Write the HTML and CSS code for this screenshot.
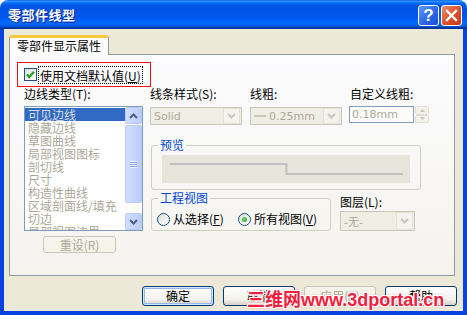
FILE: index.html
```html
<!DOCTYPE html>
<html lang="zh-CN">
  <head>
    <meta charset="UTF-8" />
    <title>零部件线型</title>
    <link rel="stylesheet" href="styles.css">
  </head>
  <body>
    <div class="window">
      <div class="titlebar">
        <span class="title">零部件线型</span>
        <div class="caption-buttons">
          <span class="cap-btn help">?</span>
          <span class="cap-btn close">
            <svg width="19" height="19" viewBox="0 0 19 19">
              <path d="M5 5 L14 14 M14 5 L5 14" stroke="#fff" stroke-width="2.4" stroke-linecap="square" />
            </svg>
          </span>
        </div>
      </div>

      <div class="frame">
        <div class="client">
          <div class="tabs">
            <div class="tab">零部件显示属性</div>
          </div>

          <div class="panel">
            <div class="default-box">
              <span class="checkbox">
                <svg width="11" height="11" viewBox="0 0 11 11">
                  <polyline points="2,5.5 4.2,8 9,2.8" fill="none" stroke="#21A121" stroke-width="2.2" />
                </svg>
              </span>
              <span class="focus-label">使用文档默认值(<u>U</u>)</span>
            </div>

            <div class="main">
              <!-- edge type list -->
              <div class="col-left">
                <div class="field-label">边线类型(T):</div>
                <div class="listbox">
                  <ul class="items">
                    <li class="selected">可见边线</li>
                    <li>隐藏边线</li>
                    <li>草图曲线</li>
                    <li>局部视图图标</li>
                    <li>剖切线</li>
                    <li>尺寸</li>
                    <li>构造性曲线</li>
                    <li>区域剖面线/填充</li>
                    <li>切边</li>
                    <li>局部视图边界</li>
                  </ul>
                  <div class="scrollbar">
                    <span class="sb-btn">
                      <svg width="9" height="6" viewBox="0 0 9 6"><polyline points="1,5 4.5,1.5 8,5" fill="none" stroke="#4D6185" stroke-width="2" /></svg>
                    </span>
                    <span class="sb-thumb">
                      <span class="grip"></span>
                    </span>
                    <span class="sb-track"></span>
                    <span class="sb-btn">
                      <svg width="9" height="6" viewBox="0 0 9 6"><polyline points="1,1 4.5,4.5 8,1" fill="none" stroke="#4D6185" stroke-width="2" /></svg>
                    </span>
                  </div>
                </div>
                <div class="btn reset disabled">重设(R)</div>
              </div>

              <div class="col-right">
                <div class="fields">
                  <div class="field style-field">
                    <div class="field-label">线条样式(S):</div>
                    <div class="combo">
                      <span class="combo-value">Solid</span>
                      <span class="combo-btn">
                        <svg width="9" height="6" viewBox="0 0 9 6"><polyline points="1,1 4.5,4.5 8,1" fill="none" stroke="#C9C7BA" stroke-width="2" /></svg>
                      </span>
                    </div>
                  </div>
                  <div class="field weight-field">
                    <div class="field-label">线粗:</div>
                    <div class="combo">
                      <span class="combo-value"><span class="dash"></span>0.25mm</span>
                      <span class="combo-btn">
                        <svg width="9" height="6" viewBox="0 0 9 6"><polyline points="1,1 4.5,4.5 8,1" fill="none" stroke="#C9C7BA" stroke-width="2" /></svg>
                      </span>
                    </div>
                  </div>
                  <div class="field custom-field">
                    <div class="field-label">自定义线粗:</div>
                    <div class="spin-input">
                      <span class="input">0.18mm</span>
                      <span class="spinner">
                        <span class="spin-btn">
                          <svg width="5" height="3" viewBox="0 0 5 3"><polygon points="0,3 2.5,0 5,3" fill="#C9C7BA" /></svg>
                        </span>
                        <span class="spin-btn">
                          <svg width="5" height="3" viewBox="0 0 5 3"><polygon points="0,0 2.5,3 5,0" fill="#C9C7BA" /></svg>
                        </span>
                      </span>
                    </div>
                  </div>
                </div>

                <fieldset class="group preview-group">
                  <legend>预览</legend>
                  <div class="preview">
                    <svg width="248" height="28" viewBox="0 0 248 28">
                      <path d="M8 9 H124.5 V19 H241" fill="none" stroke="#C0C0C0" stroke-width="2" />
                    </svg>
                  </div>
                </fieldset>

                <div class="row2">
                  <fieldset class="group view-group">
                    <legend>工程视图</legend>
                    <div class="radios">
                      <label class="radio-item first"><span class="radio"></span>从选择(<u>F</u>)</label>
                      <label class="radio-item"><span class="radio checked"></span>所有视图(<u>V</u>)</label>
                    </div>
                  </fieldset>
                  <div class="layer">
                    <div class="field-label">图层(L):</div>
                    <div class="combo layer-combo">
                      <span class="combo-value">-无-</span>
                      <span class="combo-btn">
                        <svg width="9" height="6" viewBox="0 0 9 6"><polyline points="1,1 4.5,4.5 8,1" fill="none" stroke="#C9C7BA" stroke-width="2" /></svg>
                      </span>
                    </div>
                  </div>
                </div>
              </div>
            </div>
          </div>

          <div class="buttons">
            <div class="btn default">确定</div>
            <div class="btn">取消</div>
            <div class="btn disabled">应用(A)</div>
            <div class="btn">帮助</div>
          </div>
        </div>
      </div>

      <div class="watermark"><span class="wm-cn">三维网</span>www.3dportal.cn</div>
    </div>
  </body>
</html>
```

FILE: styles.css
```css
body {
  margin: 0;
  background: #ffffff;
  font-family: "Noto Sans CJK SC", "DejaVu Sans", sans-serif;
  font-size: 12px;
  color: #000000;
}

.window {
  position: relative;
  width: 467px;
  height: 315px;
  display: flex;
  flex-direction: column;
}

/* XP title bar */
.titlebar {
  height: 29px;
  flex: none;
  box-sizing: border-box;
  padding: 0 5px 0 8px;
  border-radius: 8px 8px 0 0;
  display: flex;
  justify-content: space-between;
  align-items: flex-start;
  background: linear-gradient(
    to bottom,
    #0058ee 0%,
    #3593ff 4%,
    #288eff 6%,
    #127dff 8%,
    #036ffc 10%,
    #0262ee 14%,
    #0057e5 20%,
    #0054e3 24%,
    #0055eb 56%,
    #005bf5 66%,
    #026afe 76%,
    #0062ef 86%,
    #0052d6 92%,
    #0040ab 94%,
    #003092 100%
  );
}
.title {
  margin-top: 6px;
  color: #ffffff;
  font-weight: bold;
  font-size: 13px;
  line-height: 17px;
  letter-spacing: 0.5px;
  text-shadow: 1px 1px #0a1e8c;
}
.caption-buttons {
  display: flex;
  gap: 2px;
  margin-top: 5px;
}
.cap-btn {
  width: 21px;
  height: 21px;
  box-sizing: border-box;
  border: 1px solid #ffffff;
  border-radius: 3px;
  display: flex;
  align-items: center;
  justify-content: center;
}
.help {
  background: linear-gradient(135deg, #5c9aff, #2a63e6 60%, #1d4fd0);
  color: #ffffff;
  font-family: "Liberation Sans", sans-serif;
  font-weight: bold;
  font-size: 17px;
}
.close {
  background: linear-gradient(135deg, #ec8d6c, #db4f2a 55%, #c43d17);
}

/* window frame + client */
.frame {
  flex: 1;
  display: flex;
  border: solid #0842dd;
  border-width: 0 4px 4px 4px;
}
.client {
  flex: 1;
  display: flex;
  flex-direction: column;
  background: #ece9d8;
  padding: 6px 8px 5px 5px;
}

.tabs {
  display: flex;
  height: 20px;
  margin-bottom: -1px;
  position: relative;
  z-index: 1;
}
.tab {
  width: 100px;
  height: 20px;
  box-sizing: border-box;
  border: 1px solid #919b9c;
  border-top: 3px solid #ffc83c;
  border-bottom: none;
  border-radius: 3px 3px 0 0;
  background: #ffffff;
  padding-left: 7px;
  line-height: 15px;
}

.panel {
  height: 222px;
  box-sizing: border-box;
  border: 1px solid #919b9c;
  background: linear-gradient(#fcfcfe, #f4f3ee);
  padding: 7px 0 0 7px;
}

.default-box {
  width: 134px;
  height: 25px;
  box-sizing: border-box;
  border: 1px solid #f01010;
  display: flex;
  align-items: center;
  padding-left: 6px;
}
.checkbox {
  width: 13px;
  height: 13px;
  box-sizing: border-box;
  border: 1px solid #1c5180;
  background: linear-gradient(135deg, #dcdcd7, #ffffff);
  display: flex;
  align-items: center;
  justify-content: center;
}
.focus-label {
  margin-left: 2px;
  padding: 1px 1px 0 1px;
  line-height: 15px;
  outline: 1px dotted #000000;
}

.main {
  display: flex;
}
.field-label {
  line-height: 14px;
  white-space: nowrap;
}

/* left column */
.col-left {
  margin-left: 7px;
  width: 119px;
}
.listbox {
  margin-top: 5px;
  height: 125px;
  box-sizing: border-box;
  border: 1px solid #7f9db9;
  background: #ffffff;
  display: flex;
}
.items {
  flex: 1;
  margin: 0;
  padding: 1px 0 0 0;
  list-style: none;
  overflow: hidden;
  color: #aca899;
}
.items li {
  height: 13px;
  line-height: 13px;
  padding-left: 3px;
  white-space: nowrap;
}
.items li.selected {
  background: #316ac5;
  color: #dcdcdc;
}
.scrollbar {
  width: 17px;
  display: flex;
  flex-direction: column;
  background: #fbfbf8;
}
.sb-btn,
.sb-thumb {
  box-sizing: border-box;
  border: 1px solid #b8cbf6;
  border-radius: 2px;
  background: linear-gradient(to right, #d2defc, #b9ccf9);
  display: flex;
  align-items: center;
  justify-content: center;
}
.sb-btn {
  height: 17px;
}
.sb-thumb {
  height: 78px;
  margin-top: 1px;
}
.grip {
  width: 7px;
  height: 7px;
  background: repeating-linear-gradient(
    to bottom,
    #eef3fe 0,
    #eef3fe 1px,
    #8ca5e0 1px,
    #8ca5e0 2px
  );
}
.sb-track {
  flex: 1;
}

.btn {
  width: 72px;
  height: 20px;
  box-sizing: border-box;
  border: 1px solid #003c74;
  border-radius: 3px;
  background: linear-gradient(#ffffff, #f2f1ec 70%, #d6d0c5);
  text-align: center;
  line-height: 18px;
}
.btn.default {
  box-shadow: inset 0 0 0 1px #cee7ff, inset 0 0 0 2px #98b8ea;
}
.btn.disabled {
  border-color: #c9c7ba;
  background: #f5f4ea;
  color: #aca899;
}
.btn.reset {
  width: 73px;
  height: 17px;
  line-height: 15px;
  margin: 5px 0 0 19px;
}

/* right column */
.col-right {
  margin-left: 7px;
}
.fields {
  display: flex;
}
.style-field {
  width: 100px;
}
.weight-field {
  width: 99px;
}
.custom-field .field-label {
  padding-left: 1px;
}
.combo {
  margin-top: 6px;
  width: 92px;
  height: 18px;
  box-sizing: border-box;
  border: 1px solid #c9c7ba;
  background: #efeee4;
  display: flex;
  align-items: center;
}
.combo-value {
  flex: 1;
  padding-left: 3px;
  color: #aca899;
  font-family: "DejaVu Sans", sans-serif;
  font-size: 11px;
  display: flex;
  align-items: center;
}
.dash {
  width: 12px;
  border-top: 2px solid #c9c7ba;
  margin-right: 3px;
}
.combo-btn {
  width: 15px;
  height: 14px;
  margin-right: 1px;
  background: #f3f2ec;
  border: 1px solid #e4e2d9;
  display: flex;
  align-items: center;
  justify-content: center;
}
.spin-input {
  margin-top: 5px;
  display: flex;
}
.input {
  width: 65px;
  height: 17px;
  box-sizing: border-box;
  border: 1px solid #7f9db9;
  background: #fbfbf9;
  padding-left: 2px;
  line-height: 15px;
  color: #aca899;
  font-family: "DejaVu Sans", sans-serif;
  font-size: 11px;
}
.spinner {
  margin-left: 1px;
  width: 14px;
  height: 17px;
  display: flex;
  flex-direction: column;
}
.spin-btn {
  flex: 1;
  border: 1px solid #e0ded4;
  border-radius: 2px;
  background: #f3f2ec;
  display: flex;
  align-items: center;
  justify-content: center;
}

.group {
  margin: 0 0 0 1px;
  padding: 0;
  border: 1px solid #d0d0bf;
  border-radius: 3px;
  min-width: 0;
}
.group legend {
  margin-left: 6px;
  padding: 0 2px;
  line-height: 14px;
  color: #0046d5;
}
.preview-group {
  margin-top: 13px;
  width: 270px;
  box-sizing: border-box;
}
.preview {
  margin: 3px 10px 6px 10px;
  height: 28px;
  background: #e6e4db;
}
.preview svg {
  display: block;
}

.row2 {
  margin-top: 1px;
  display: flex;
}
.view-group {
  width: 180px;
  box-sizing: border-box;
}
.radios {
  display: flex;
  padding: 7px 0 2px 5px;
}
.radio-item {
  display: flex;
  align-items: center;
  line-height: 14px;
}
.radio-item.first {
  width: 81px;
}
.radio {
  width: 13px;
  height: 13px;
  box-sizing: border-box;
  border: 1px solid #1c5180;
  border-radius: 50%;
  background: linear-gradient(135deg, #dcdcd7, #ffffff);
  margin-right: 3px;
  display: flex;
  align-items: center;
  justify-content: center;
}
.radio.checked::after {
  content: "";
  width: 5px;
  height: 5px;
  border-radius: 50%;
  background: radial-gradient(circle at 40% 40%, #6fdd6f, #21a121);
}

.layer {
  margin-left: 9px;
  padding-top: 4px;
}
.layer-combo {
  margin-top: 2px;
  width: 75px;
  height: 20px;
}
.layer-combo .combo-btn {
  height: 16px;
}

.buttons {
  margin: 10px -2px 0 0;
  display: flex;
  justify-content: flex-end;
  gap: 9px;
}

/* site watermark lying over the dialog */
.watermark {
  position: absolute;
  left: 247px;
  top: 287px;
  font-family: "Liberation Sans", sans-serif;
  font-weight: bold;
  font-size: 18px;
  line-height: 22px;
  color: #f0203c;
  white-space: nowrap;
  text-shadow: 1px 0 #fff, -1px 0 #fff, 0 1px #fff, 0 -1px #fff,
    1px 1px #fff, -1px -1px #fff, 1px -1px #fff, -1px 1px #fff,
    0 0 3px #f5607a;
}
.wm-cn {
  font-family: "Noto Sans CJK SC", sans-serif;
}
```
